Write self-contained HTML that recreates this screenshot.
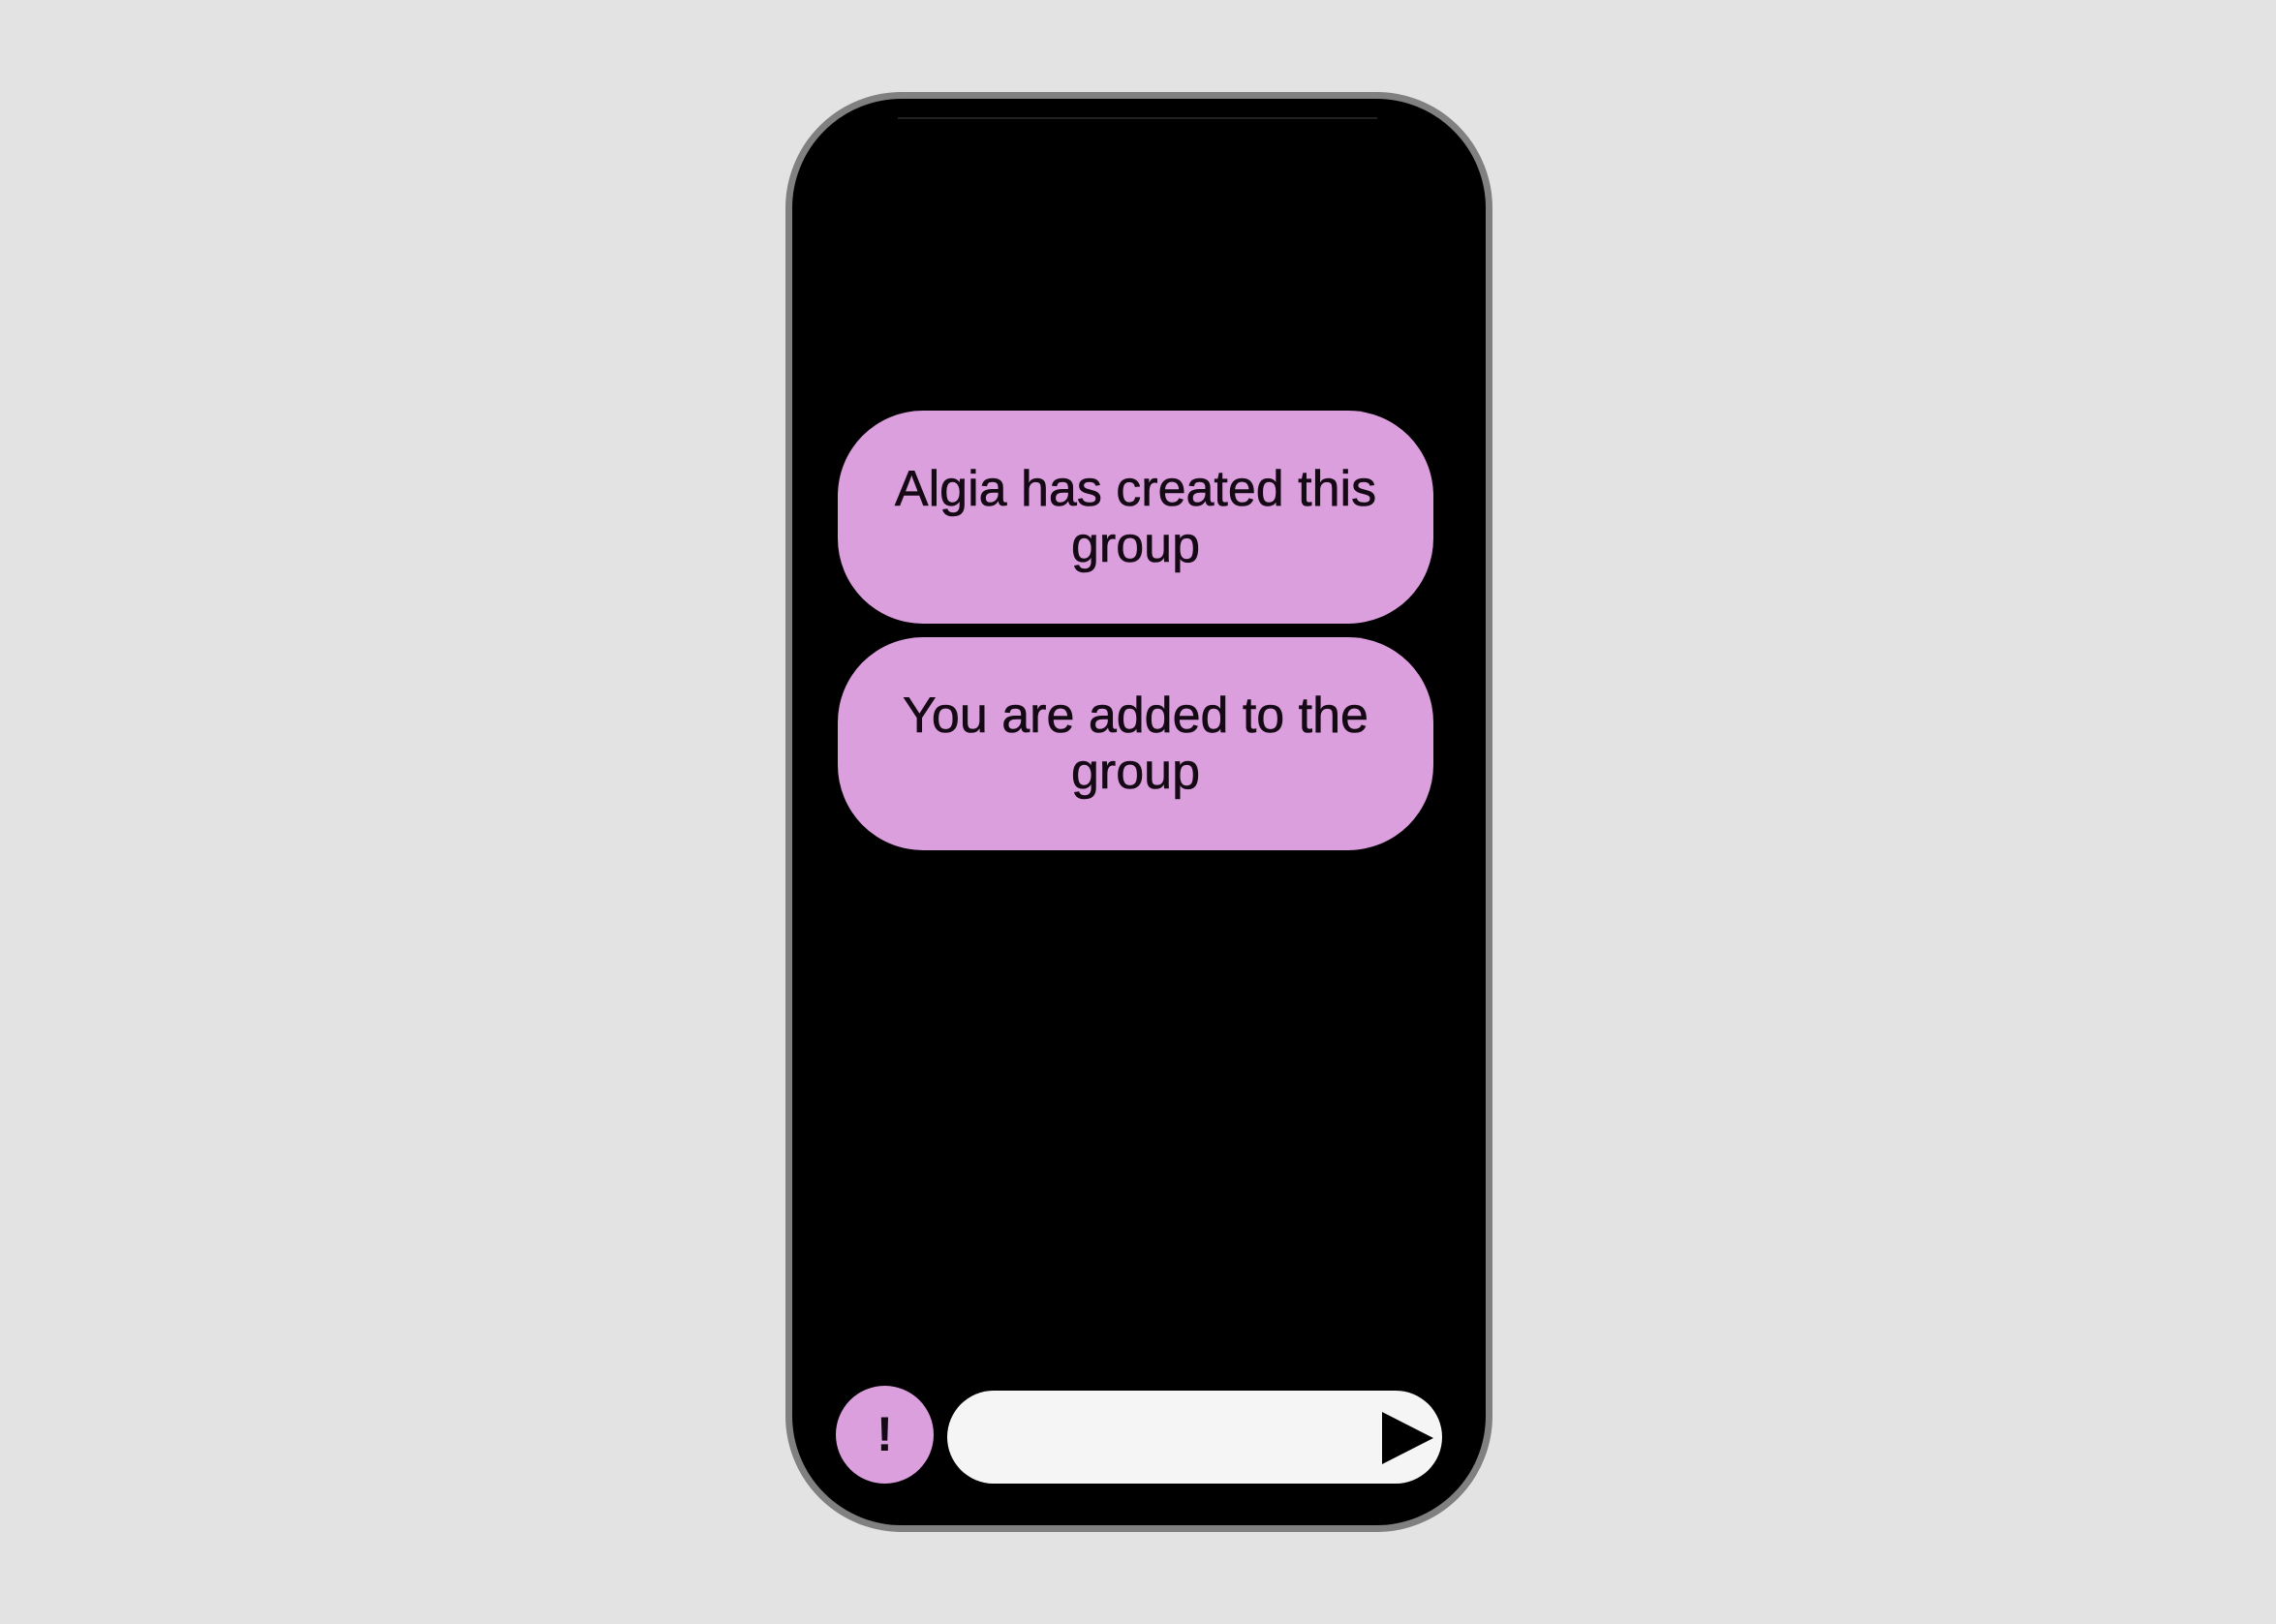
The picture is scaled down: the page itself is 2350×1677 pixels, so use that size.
<!DOCTYPE html>
<html><head><meta charset="utf-8"><style>
html,body{margin:0;padding:0}
body{width:2350px;height:1677px;background:#e3e3e3;position:relative;overflow:hidden;font-family:"Liberation Sans",sans-serif}
.phone{position:absolute;left:811px;top:95px;width:716px;height:1473px;background:#000;border:7px solid #808080;border-radius:120px}
.line{position:absolute;left:927px;top:121px;width:495px;height:2px;background:#222}
.b{position:absolute;left:865px;width:615px;height:220px;background:#dc9fde;border-radius:88px;display:flex;align-items:center;justify-content:center;text-align:center;font-size:52px;line-height:58px;color:#150915;padding:0 30px;box-sizing:border-box;-webkit-text-stroke:0.6px #150915}
.c{position:absolute;left:863px;top:1431px;width:101px;height:101px;border-radius:50%;background:#dc9fde;text-align:center;line-height:101px;font-size:50px;font-weight:bold;color:#150915}
.in{position:absolute;left:978px;top:1436px;width:511px;height:96px;border-radius:48px;background:#f5f5f5}
</style></head><body>
<div class="phone"></div>
<div class="line"></div>
<div class="b" style="top:424px">Algia has created this group</div>
<div class="b" style="top:658px">You are added to the group</div>
<div class="c">!</div>
<div class="in"></div>
<svg style="position:absolute;left:1420px;top:1455px" width="70" height="60"><polygon points="7,3 60,30 7,57" fill="#000"/></svg>
</body></html>
